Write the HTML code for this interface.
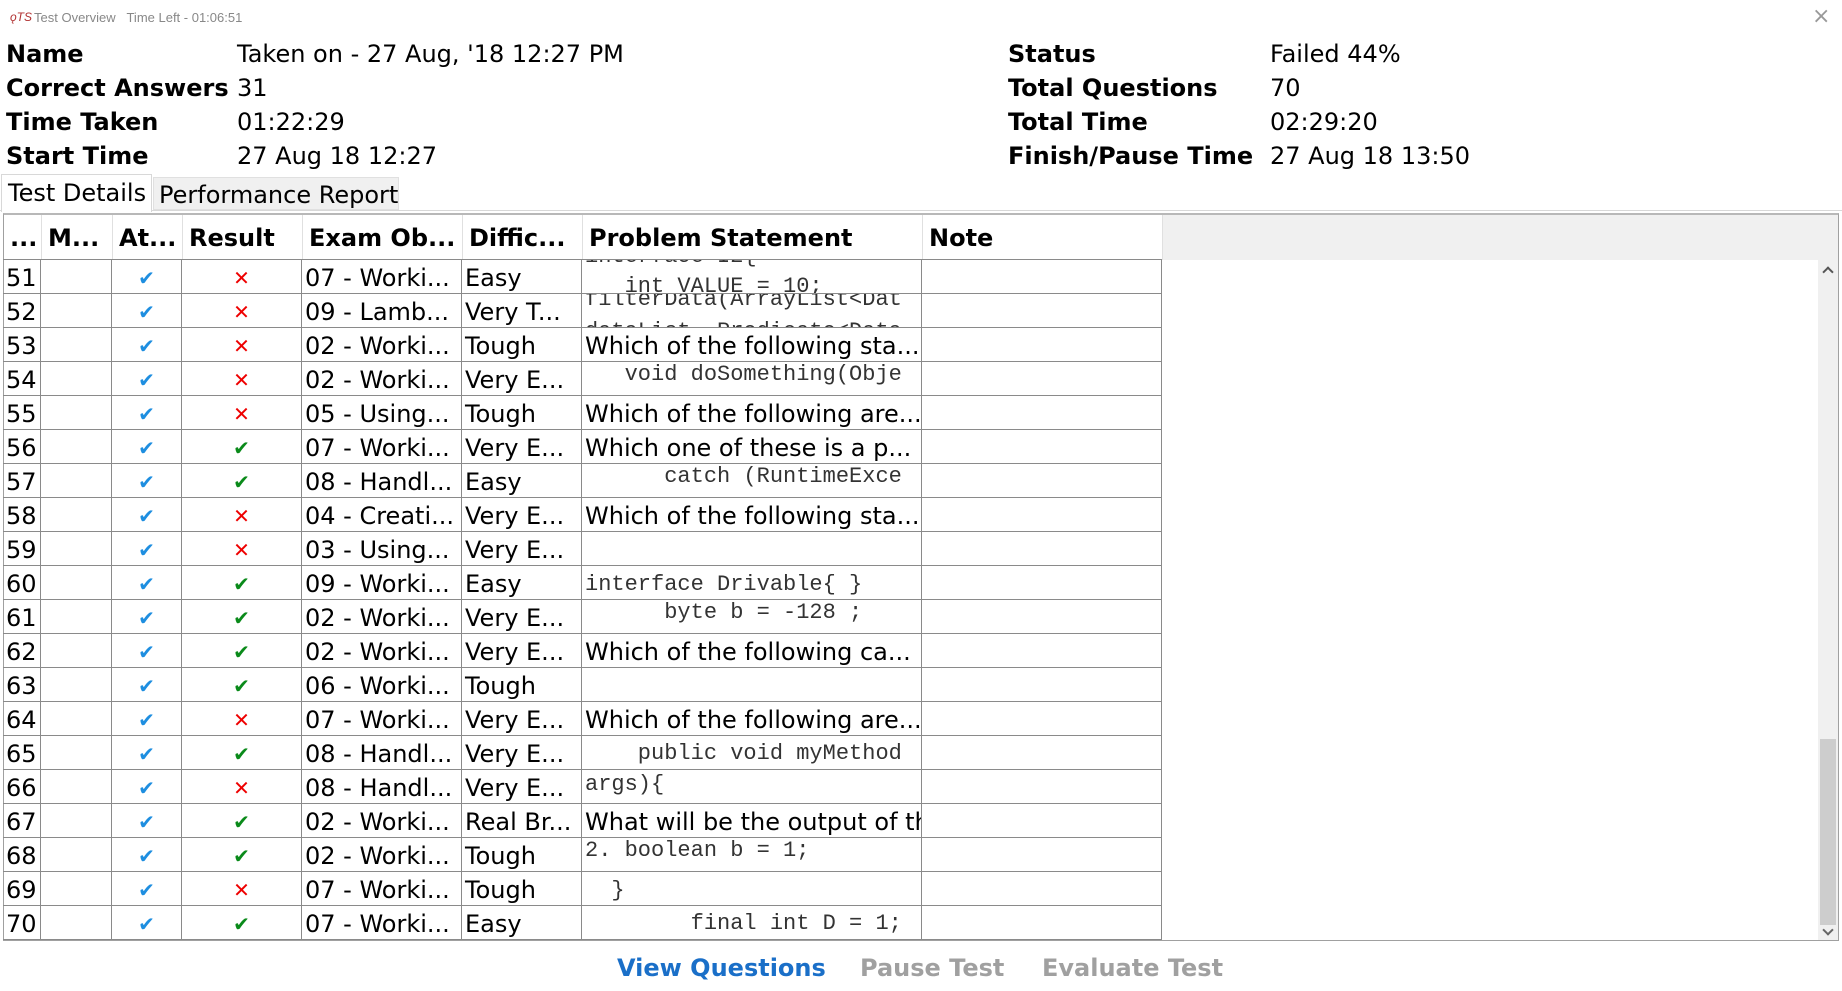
<!DOCTYPE html>
<html><head><meta charset="utf-8"><style>
*{margin:0;padding:0;box-sizing:border-box}
body{width:1842px;height:991px;background:#fff;position:relative;overflow:hidden;font-family:"DejaVu Sans","Liberation Sans",sans-serif;color:#000}
.a{position:absolute;white-space:nowrap}
.t{font-size:13px;color:#888;top:10px;font-family:"Liberation Sans",sans-serif}
.l{font-size:24px;font-weight:bold;left:6px}
.v{font-size:24px}
#tbl{position:absolute;left:3px;top:213px;width:1836px;height:728px;border:1px solid #a0a0a0;border-top:2px solid #b8b8b8;overflow:hidden}
.hd{position:absolute;left:0;top:0;height:45px;width:1834px;background:#f0f0f0}
.hc{position:absolute;top:0;height:45px;background:#fff;border-right:1px solid #e0e0e0;font-weight:bold;font-size:24px;line-height:46px;padding-left:6px;overflow:hidden;white-space:nowrap}
.r{position:absolute;left:0;height:34px;width:1159px;border-top:1px solid #8a8a8a}
.c{position:absolute;top:0;height:34px;border-right:1px solid #8a8a8a;font-size:24px;line-height:36px;padding-left:3px;overflow:hidden;white-space:nowrap}
.m{font-family:"Liberation Mono",monospace;font-size:22px;color:#333;line-height:26px}
.m div{position:relative}
.ok{color:#1e8ee0;font-size:20px;text-align:center;padding:0}
.x{color:#e00;font-size:20px;text-align:center;padding:0}
.g{color:#0a8a1a;font-size:20px;text-align:center;padding:0}
#sb{position:absolute;left:1814px;top:45px;width:20px;height:681px;background:#f0f0f0}
.btn{position:absolute;top:954px;font-size:24px;font-weight:bold;color:#a0a0a0}
</style></head><body>
<div class="a t" style="left:10px;color:#b03030;font-size:12px;font-style:italic">&#491;TS</div>
<div class="a t" style="left:34px">Test Overview&nbsp;&nbsp;&nbsp;Time Left - 01:06:51</div>
<div class="a" style="left:1812px;top:4px;font-size:22px;color:#999">×</div>

<div class="a l" style="top:40px">Name</div><div class="a v" style="left:237px;top:40px">Taken on - 27 Aug, '18 12:27 PM</div>
<div class="a l" style="top:74px">Correct Answers</div><div class="a v" style="left:237px;top:74px">31</div>
<div class="a l" style="top:108px">Time Taken</div><div class="a v" style="left:237px;top:108px">01:22:29</div>
<div class="a l" style="top:142px">Start Time</div><div class="a v" style="left:237px;top:142px">27 Aug 18 12:27</div>
<div class="a l" style="left:1008px;top:40px">Status</div><div class="a v" style="left:1270px;top:40px">Failed 44%</div>
<div class="a l" style="left:1008px;top:74px">Total Questions</div><div class="a v" style="left:1270px;top:74px">70</div>
<div class="a l" style="left:1008px;top:108px">Total Time</div><div class="a v" style="left:1270px;top:108px">02:29:20</div>
<div class="a l" style="left:1008px;top:142px">Finish/Pause Time</div><div class="a v" style="left:1270px;top:142px">27 Aug 18 13:50</div>

<div class="a" style="left:0;top:210px;width:1842px;border-top:1px solid #d8d8d8"></div>
<div class="a" style="left:1px;top:174px;width:151px;height:38px;border:1px solid #d8d8d8;border-bottom:none;background:#fff;font-size:24px;padding:4px 0 0 6px">Test Details</div>
<div class="a" style="left:153px;top:177px;width:246px;height:33px;background:#f0f0f0;border:1px solid #e0e0e0;font-size:24px;padding:3px 0 0 5px">Performance Report</div>

<div id="tbl">
<div class="hd">
<div class="hc" style="left:0;width:38px">...</div>
<div class="hc" style="left:38px;width:71px">M...</div>
<div class="hc" style="left:109px;width:70px">At...</div>
<div class="hc" style="left:179px;width:120px">Result</div>
<div class="hc" style="left:299px;width:160px">Exam Ob...</div>
<div class="hc" style="left:459px;width:120px">Diffic...</div>
<div class="hc" style="left:579px;width:340px">Problem Statement</div>
<div class="hc" style="left:919px;width:240px">Note</div>
</div>
<div id="sb"><div style="position:absolute;left:6px;top:8px;width:8px;height:8px;border-left:2px solid #555;border-top:2px solid #555;transform:rotate(45deg)"></div>
<div style="position:absolute;left:2px;top:479px;width:16px;height:186px;background:#cdcdcd"></div>
<div style="position:absolute;left:6px;top:666px;width:8px;height:8px;border-right:2px solid #666;border-bottom:2px solid #666;transform:rotate(45deg)"></div></div>
</div>

<div class="btn" style="left:617px;color:#1a6fc8">View Questions</div>
<div class="btn" style="left:860px">Pause Test</div>
<div class="btn" style="left:1042px">Evaluate Test</div>

<div style="position:absolute;left:3px;top:259px">
<div class="r" style="top:0"><div class="c" style="left:0;width:38px">51</div><div class="c" style="left:38px;width:71px"></div><div class="c ok" style="left:109px;width:70px">✔</div><div class="c x" style="left:179px;width:120px">✕</div><div class="c" style="left:299px;width:160px">07 - Worki...</div><div class="c" style="left:459px;width:120px">Easy</div><div class="c m" style="left:579px;width:340px"><div style="top:-18px;line-height:30px">interface I2{<br>&nbsp;&nbsp;&nbsp;int VALUE = 10;</div></div><div class="c" style="left:919px;width:240px"></div></div>
<div class="r" style="top:34px"><div class="c" style="left:0;width:38px">52</div><div class="c" style="left:38px;width:71px"></div><div class="c ok" style="left:109px;width:70px">✔</div><div class="c x" style="left:179px;width:120px">✕</div><div class="c" style="left:299px;width:160px">09 - Lamb...</div><div class="c" style="left:459px;width:120px">Very T...</div><div class="c m" style="left:579px;width:340px"><div style="top:-10px;line-height:32px">filterData(ArrayList&lt;Dat<br>dataList, Predicate&lt;Data</div></div><div class="c" style="left:919px;width:240px"></div></div>
<div class="r" style="top:68px"><div class="c" style="left:0;width:38px">53</div><div class="c" style="left:38px;width:71px"></div><div class="c ok" style="left:109px;width:70px">✔</div><div class="c x" style="left:179px;width:120px">✕</div><div class="c" style="left:299px;width:160px">02 - Worki...</div><div class="c" style="left:459px;width:120px">Tough</div><div class="c" style="left:579px;width:340px">Which of the following sta...</div><div class="c" style="left:919px;width:240px"></div></div>
<div class="r" style="top:102px"><div class="c" style="left:0;width:38px">54</div><div class="c" style="left:38px;width:71px"></div><div class="c ok" style="left:109px;width:70px">✔</div><div class="c x" style="left:179px;width:120px">✕</div><div class="c" style="left:299px;width:160px">02 - Worki...</div><div class="c" style="left:459px;width:120px">Very E...</div><div class="c m" style="left:579px;width:340px">&nbsp;&nbsp;&nbsp;void doSomething(Obje</div><div class="c" style="left:919px;width:240px"></div></div>
<div class="r" style="top:136px"><div class="c" style="left:0;width:38px">55</div><div class="c" style="left:38px;width:71px"></div><div class="c ok" style="left:109px;width:70px">✔</div><div class="c x" style="left:179px;width:120px">✕</div><div class="c" style="left:299px;width:160px">05 - Using...</div><div class="c" style="left:459px;width:120px">Tough</div><div class="c" style="left:579px;width:340px">Which of the following are...</div><div class="c" style="left:919px;width:240px"></div></div>
<div class="r" style="top:170px"><div class="c" style="left:0;width:38px">56</div><div class="c" style="left:38px;width:71px"></div><div class="c ok" style="left:109px;width:70px">✔</div><div class="c g" style="left:179px;width:120px">✔</div><div class="c" style="left:299px;width:160px">07 - Worki...</div><div class="c" style="left:459px;width:120px">Very E...</div><div class="c" style="left:579px;width:340px">Which one of these is a p...</div><div class="c" style="left:919px;width:240px"></div></div>
<div class="r" style="top:204px"><div class="c" style="left:0;width:38px">57</div><div class="c" style="left:38px;width:71px"></div><div class="c ok" style="left:109px;width:70px">✔</div><div class="c g" style="left:179px;width:120px">✔</div><div class="c" style="left:299px;width:160px">08 - Handl...</div><div class="c" style="left:459px;width:120px">Easy</div><div class="c m" style="left:579px;width:340px">&nbsp;&nbsp;&nbsp;&nbsp;&nbsp;&nbsp;catch (RuntimeExce</div><div class="c" style="left:919px;width:240px"></div></div>
<div class="r" style="top:238px"><div class="c" style="left:0;width:38px">58</div><div class="c" style="left:38px;width:71px"></div><div class="c ok" style="left:109px;width:70px">✔</div><div class="c x" style="left:179px;width:120px">✕</div><div class="c" style="left:299px;width:160px">04 - Creati...</div><div class="c" style="left:459px;width:120px">Very E...</div><div class="c" style="left:579px;width:340px">Which of the following sta...</div><div class="c" style="left:919px;width:240px"></div></div>
<div class="r" style="top:272px"><div class="c" style="left:0;width:38px">59</div><div class="c" style="left:38px;width:71px"></div><div class="c ok" style="left:109px;width:70px">✔</div><div class="c x" style="left:179px;width:120px">✕</div><div class="c" style="left:299px;width:160px">03 - Using...</div><div class="c" style="left:459px;width:120px">Very E...</div><div class="c" style="left:579px;width:340px"></div><div class="c" style="left:919px;width:240px"></div></div>
<div class="r" style="top:306px"><div class="c" style="left:0;width:38px">60</div><div class="c" style="left:38px;width:71px"></div><div class="c ok" style="left:109px;width:70px">✔</div><div class="c g" style="left:179px;width:120px">✔</div><div class="c" style="left:299px;width:160px">09 - Worki...</div><div class="c" style="left:459px;width:120px">Easy</div><div class="c m" style="left:579px;width:340px;line-height:38px">interface Drivable{ }</div><div class="c" style="left:919px;width:240px"></div></div>
<div class="r" style="top:340px"><div class="c" style="left:0;width:38px">61</div><div class="c" style="left:38px;width:71px"></div><div class="c ok" style="left:109px;width:70px">✔</div><div class="c g" style="left:179px;width:120px">✔</div><div class="c" style="left:299px;width:160px">02 - Worki...</div><div class="c" style="left:459px;width:120px">Very E...</div><div class="c m" style="left:579px;width:340px">&nbsp;&nbsp;&nbsp;&nbsp;&nbsp;&nbsp;byte b = -128 ;</div><div class="c" style="left:919px;width:240px"></div></div>
<div class="r" style="top:374px"><div class="c" style="left:0;width:38px">62</div><div class="c" style="left:38px;width:71px"></div><div class="c ok" style="left:109px;width:70px">✔</div><div class="c g" style="left:179px;width:120px">✔</div><div class="c" style="left:299px;width:160px">02 - Worki...</div><div class="c" style="left:459px;width:120px">Very E...</div><div class="c" style="left:579px;width:340px">Which of the following ca...</div><div class="c" style="left:919px;width:240px"></div></div>
<div class="r" style="top:408px"><div class="c" style="left:0;width:38px">63</div><div class="c" style="left:38px;width:71px"></div><div class="c ok" style="left:109px;width:70px">✔</div><div class="c g" style="left:179px;width:120px">✔</div><div class="c" style="left:299px;width:160px">06 - Worki...</div><div class="c" style="left:459px;width:120px">Tough</div><div class="c" style="left:579px;width:340px"></div><div class="c" style="left:919px;width:240px"></div></div>
<div class="r" style="top:442px"><div class="c" style="left:0;width:38px">64</div><div class="c" style="left:38px;width:71px"></div><div class="c ok" style="left:109px;width:70px">✔</div><div class="c x" style="left:179px;width:120px">✕</div><div class="c" style="left:299px;width:160px">07 - Worki...</div><div class="c" style="left:459px;width:120px">Very E...</div><div class="c" style="left:579px;width:340px">Which of the following are...</div><div class="c" style="left:919px;width:240px"></div></div>
<div class="r" style="top:476px"><div class="c" style="left:0;width:38px">65</div><div class="c" style="left:38px;width:71px"></div><div class="c ok" style="left:109px;width:70px">✔</div><div class="c g" style="left:179px;width:120px">✔</div><div class="c" style="left:299px;width:160px">08 - Handl...</div><div class="c" style="left:459px;width:120px">Very E...</div><div class="c m" style="left:579px;width:340px;line-height:36px">&nbsp;&nbsp;&nbsp;&nbsp;public void myMethod</div><div class="c" style="left:919px;width:240px"></div></div>
<div class="r" style="top:510px"><div class="c" style="left:0;width:38px">66</div><div class="c" style="left:38px;width:71px"></div><div class="c ok" style="left:109px;width:70px">✔</div><div class="c x" style="left:179px;width:120px">✕</div><div class="c" style="left:299px;width:160px">08 - Handl...</div><div class="c" style="left:459px;width:120px">Very E...</div><div class="c m" style="left:579px;width:340px;line-height:30px">args){</div><div class="c" style="left:919px;width:240px"></div></div>
<div class="r" style="top:544px"><div class="c" style="left:0;width:38px">67</div><div class="c" style="left:38px;width:71px"></div><div class="c ok" style="left:109px;width:70px">✔</div><div class="c g" style="left:179px;width:120px">✔</div><div class="c" style="left:299px;width:160px">02 - Worki...</div><div class="c" style="left:459px;width:120px">Real Br...</div><div class="c" style="left:579px;width:340px">What will be the output of th</div><div class="c" style="left:919px;width:240px"></div></div>
<div class="r" style="top:578px"><div class="c" style="left:0;width:38px">68</div><div class="c" style="left:38px;width:71px"></div><div class="c ok" style="left:109px;width:70px">✔</div><div class="c g" style="left:179px;width:120px">✔</div><div class="c" style="left:299px;width:160px">02 - Worki...</div><div class="c" style="left:459px;width:120px">Tough</div><div class="c m" style="left:579px;width:340px">2. boolean b = 1;</div><div class="c" style="left:919px;width:240px"></div></div>
<div class="r" style="top:612px"><div class="c" style="left:0;width:38px">69</div><div class="c" style="left:38px;width:71px"></div><div class="c ok" style="left:109px;width:70px">✔</div><div class="c x" style="left:179px;width:120px">✕</div><div class="c" style="left:299px;width:160px">07 - Worki...</div><div class="c" style="left:459px;width:120px">Tough</div><div class="c m" style="left:579px;width:340px;line-height:38px">&nbsp;&nbsp;}</div><div class="c" style="left:919px;width:240px"></div></div>
<div class="r" style="top:646px"><div class="c" style="left:0;width:38px">70</div><div class="c" style="left:38px;width:71px"></div><div class="c ok" style="left:109px;width:70px">✔</div><div class="c g" style="left:179px;width:120px">✔</div><div class="c" style="left:299px;width:160px">07 - Worki...</div><div class="c" style="left:459px;width:120px">Easy</div><div class="c m" style="left:579px;width:340px;line-height:36px">&nbsp;&nbsp;&nbsp;&nbsp;&nbsp;&nbsp;&nbsp;&nbsp;final int D = 1;</div><div class="c" style="left:919px;width:240px"></div></div>
<div class="r" style="top:680px;height:1px"></div>
</div>
</body></html>
